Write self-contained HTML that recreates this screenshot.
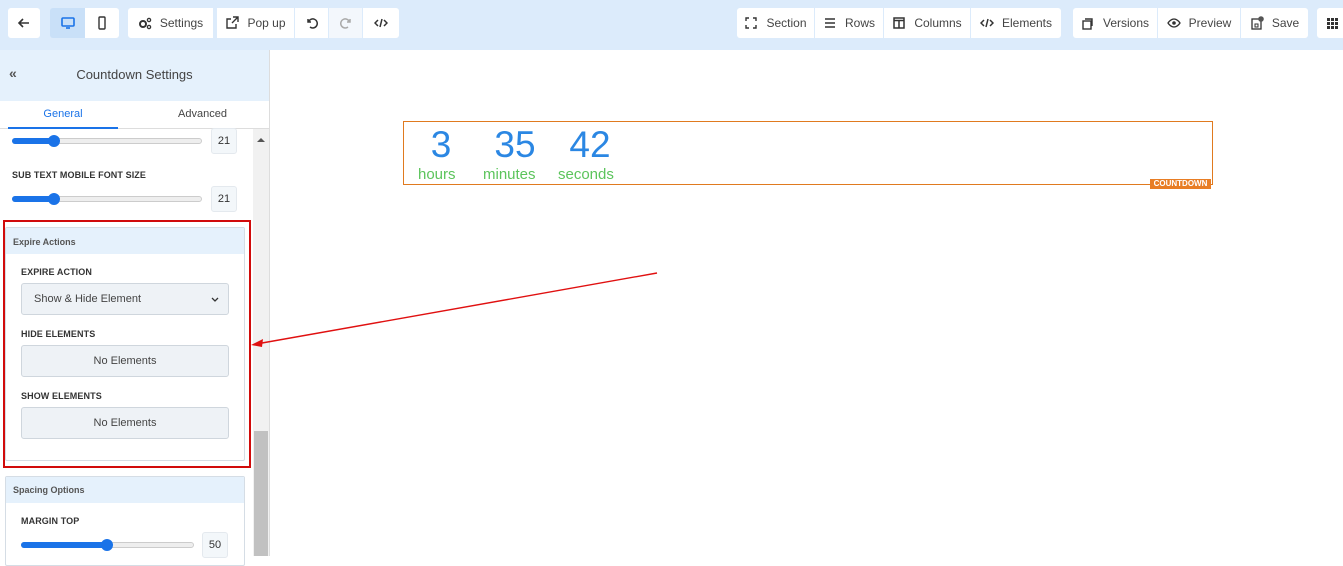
<!DOCTYPE html>
<html><head><meta charset="utf-8"><style>
*{box-sizing:border-box;margin:0;padding:0}
body{width:1343px;height:556px;overflow:hidden;background:#fff;font-family:"Liberation Sans",Arial,sans-serif;position:relative;color:#333}
.abs{position:absolute}
.top{left:0;top:0;width:1343px;height:50px;background:#dcebfb}
.b{position:absolute;top:8px;height:30px;background:#fff;display:flex;align-items:center;justify-content:center;font-size:12px;color:#444;gap:8px}
.b svg{width:14px;height:14px}
.side{left:0;top:50px;width:270px;height:506px;border-right:1px solid #ddd;background:#fff}
.lbl{font-size:9px;font-weight:bold;color:#333;letter-spacing:.1px}
.trk{position:absolute;height:6px;border-radius:3px;background:#eee;border:1px solid #ccc}
.fill{position:absolute;height:6px;border-radius:3px;background:#1a73e8}
.knob{position:absolute;width:12px;height:12px;border-radius:50%;background:#1a73e8}
.num{position:absolute;width:26px;height:26px;background:#f3f7fa;border:1px solid #e4e9ee;border-radius:3px;font-size:11px;display:flex;align-items:center;justify-content:center;color:#333}
.box{position:absolute;left:21px;width:208px;height:32px;background:#eef2f6;border:1px solid #cfd6dd;border-radius:3px;font-size:11px;color:#444;display:flex;align-items:center}
.dg{position:absolute;top:124px;text-align:center;font-size:37px;color:#2b87e3;font-family:"Liberation Sans",sans-serif;font-weight:normal}
</style></head><body>
<div class="abs top"></div>
<div class="b" style="left:8px;width:32px;border-radius:3px"><svg viewBox="0 0 14 14"><path d="M12 7H2M6 3L2 7l4 4" stroke="#333" stroke-width="1.6" fill="none"/></svg></div>
<div class="b" style="left:50px;width:35px;background:#c9e0f8;border-radius:3px 0 0 3px"><svg viewBox="0 0 14 14"><rect x="1" y="2" width="12" height="8" rx="1" fill="none" stroke="#1a73e8" stroke-width="1.6"/><path d="M5 12h4" stroke="#1a73e8" stroke-width="1.6"/></svg></div>
<div class="b" style="left:85px;width:34px;border-radius:0 3px 3px 0"><svg viewBox="0 0 14 14"><rect x="4" y="1" width="6" height="12" rx="1" fill="none" stroke="#333" stroke-width="1.4"/></svg></div>
<div class="b" style="left:128px;width:85px;border-radius:3px 0 0 3px"><svg viewBox="0 0 14 14"><circle cx="5" cy="8" r="3" fill="none" stroke="#333" stroke-width="2"/><circle cx="11" cy="4" r="1.6" fill="none" stroke="#333" stroke-width="1.3"/><circle cx="11" cy="11" r="1.6" fill="none" stroke="#333" stroke-width="1.3"/></svg>Settings</div>
<div class="b" style="left:217px;width:77px"><svg viewBox="0 0 14 14"><path d="M11 8v4H2V3h4M8 1h5v5M13 1L7 7" stroke="#333" stroke-width="1.4" fill="none"/></svg>Pop up</div>
<div class="b" style="left:295px;width:33px"><svg viewBox="0 0 14 14"><path d="M3 3v3h3M3.5 6A4.5 4.5 0 1 1 5 11" stroke="#333" stroke-width="1.5" fill="none"/></svg></div>
<div class="b" style="left:329px;width:33px;background:#f3f7fc"><svg viewBox="0 0 14 14"><path d="M11 3v3H8M10.5 6A4.5 4.5 0 1 0 9 11" stroke="#aaa" stroke-width="1.5" fill="none"/></svg></div>
<div class="b" style="left:363px;width:36px;border-radius:0 3px 3px 0"><svg viewBox="0 0 14 14"><path d="M4 4L1 7l3 3M10 4l3 3-3 3M8 3L6 11" stroke="#333" stroke-width="1.5" fill="none"/></svg></div>
<div class="b" style="left:737px;width:77px;border-radius:3px 0 0 3px"><svg viewBox="0 0 14 14"><path d="M2 5V2h3M9 2h3v3M12 9v3H9M5 12H2V9" stroke="#333" stroke-width="1.4" fill="none"/></svg>Section</div>
<div class="b" style="left:815px;width:68px"><svg viewBox="0 0 14 14"><path d="M2 3h10M2 7h10M2 11h10" stroke="#333" stroke-width="1.4"/></svg>Rows</div>
<div class="b" style="left:884px;width:86px"><svg viewBox="0 0 14 14"><rect x="2" y="2" width="10" height="10" fill="none" stroke="#333" stroke-width="1.5"/><path d="M2 4.5h10M7 4v8" stroke="#333" stroke-width="1.5"/></svg>Columns</div>
<div class="b" style="left:971px;width:90px;border-radius:0 3px 3px 0"><svg viewBox="0 0 14 14"><path d="M4 4L1 7l3 3M10 4l3 3-3 3M8 3L6 11" stroke="#333" stroke-width="1.5" fill="none"/></svg>Elements</div>
<div class="b" style="left:1073px;width:84px;border-radius:3px 0 0 3px"><svg viewBox="0 0 14 14"><rect x="2" y="5" width="8" height="8" fill="none" stroke="#333" stroke-width="1.4"/><path d="M4 3h7v7" stroke="#333" stroke-width="1.4" fill="none"/></svg>Versions</div>
<div class="b" style="left:1158px;width:82px"><svg viewBox="0 0 14 14"><path d="M1 7s2.5-4 6-4 6 4 6 4-2.5 4-6 4-6-4-6-4z" fill="none" stroke="#333" stroke-width="1.3"/><circle cx="7" cy="7" r="1.8" fill="#333"/></svg>Preview</div>
<div class="b" style="left:1241px;width:67px;border-radius:0 3px 3px 0"><svg viewBox="0 0 14 14"><rect x="2" y="3" width="9" height="10" fill="none" stroke="#333" stroke-width="1.3"/><rect x="5" y="8" width="3" height="3" fill="none" stroke="#333" stroke-width="1"/><circle cx="11" cy="3" r="2.8" fill="#555"/></svg>Save</div>
<div class="b" style="left:1317px;width:30px;border-radius:3px 0 0 3px"><svg viewBox="0 0 14 14"><g fill="#333"><rect x="2" y="2" width="3" height="3"/><rect x="6" y="2" width="3" height="3"/><rect x="10" y="2" width="3" height="3"/><rect x="2" y="6" width="3" height="3"/><rect x="6" y="6" width="3" height="3"/><rect x="10" y="6" width="3" height="3"/><rect x="2" y="10" width="3" height="3"/><rect x="6" y="10" width="3" height="3"/><rect x="10" y="10" width="3" height="3"/></g></svg></div>

<div class="abs side"></div>
<div class="abs" style="left:0;top:50px;width:269px;height:51px;background:#e5f1fc"></div>
<div class="abs" style="left:9px;top:65px;font-size:14px;font-weight:bold;color:#555">«</div>
<div class="abs" style="left:0;top:67px;width:269px;text-align:center;font-size:13px;color:#444">Countdown Settings</div>
<div class="abs" style="left:0;top:101px;width:269px;height:28px;border-bottom:1px solid #ddd"></div>
<div class="abs" style="left:8px;top:108px;width:110px;text-align:center;font-size:11px;color:#1a73e8">General</div>
<div class="abs" style="left:8px;top:127px;width:110px;height:2px;background:#1a73e8"></div>
<div class="abs" style="left:135px;top:108px;width:135px;text-align:center;font-size:11px;color:#444">Advanced</div>
<div class="abs" style="left:253px;top:129px;width:16px;height:427px;background:#f1f1f1"></div>
<div class="abs" style="left:257px;top:138px;width:0;height:0;border-left:4px solid transparent;border-right:4px solid transparent;border-bottom:4px solid #555"></div>
<div class="abs" style="left:254px;top:431px;width:14px;height:125px;background:#c1c1c1"></div>

<div class="trk" style="left:12px;top:138px;width:190px"></div><div class="fill" style="left:12px;top:138px;width:42px"></div><div class="knob" style="left:48px;top:135px"></div>
<div class="num" style="left:211px;top:128px">21</div>
<div class="abs lbl" style="left:12px;top:170px">SUB TEXT MOBILE FONT SIZE</div>
<div class="trk" style="left:12px;top:196px;width:190px"></div><div class="fill" style="left:12px;top:196px;width:42px"></div><div class="knob" style="left:48px;top:193px"></div>
<div class="num" style="left:211px;top:186px">21</div>

<div class="abs" style="left:3px;top:220px;width:248px;height:248px;border:2px solid #d10b0b"></div>
<div class="abs" style="left:5px;top:227px;width:240px;height:234px;border:1px solid #d5dde5;border-radius:2px"></div>
<div class="abs" style="left:6px;top:228px;width:238px;height:26px;background:#e5f1fc"></div>
<div class="abs" style="left:13px;top:237px;font-size:9px;font-weight:bold;color:#555">Expire Actions</div>
<div class="abs lbl" style="left:21px;top:267px">EXPIRE ACTION</div>
<div class="box" style="top:283px;padding-left:12px">Show &amp; Hide Element<svg style="position:absolute;right:9px;top:13px" width="8" height="6" viewBox="0 0 8 6"><path d="M1 1l3 3 3-3" stroke="#333" stroke-width="1.3" fill="none"/></svg></div>
<div class="abs lbl" style="left:21px;top:329px">HIDE ELEMENTS</div>
<div class="box" style="top:345px;justify-content:center">No Elements</div>
<div class="abs lbl" style="left:21px;top:391px">SHOW ELEMENTS</div>
<div class="box" style="top:407px;justify-content:center">No Elements</div>

<div class="abs" style="left:5px;top:476px;width:240px;height:90px;border:1px solid #d5dde5;border-radius:2px"></div>
<div class="abs" style="left:6px;top:477px;width:238px;height:26px;background:#e5f1fc"></div>
<div class="abs" style="left:13px;top:485px;font-size:9px;font-weight:bold;color:#555">Spacing Options</div>
<div class="abs lbl" style="left:21px;top:516px">MARGIN TOP</div>
<div class="trk" style="left:21px;top:542px;width:173px"></div><div class="fill" style="left:21px;top:542px;width:86px"></div><div class="knob" style="left:101px;top:539px"></div>
<div class="num" style="left:202px;top:532px">50</div>

<div class="abs" style="left:403px;top:121px;width:810px;height:64px;border:1px solid #e07a1f"></div>
<div class="abs" style="left:1150px;top:179px;width:61px;height:10px;background:#e87d24;color:#fff;font-size:8px;font-weight:bold;line-height:10px;text-align:center">COUNTDOWN</div>
<div class="dg" style="left:418px;width:46px">3</div>
<div class="dg" style="left:485px;width:60px">35</div>
<div class="dg" style="left:560px;width:60px">42</div>
<div class="abs" style="left:418px;top:166px;font-size:15px;color:#5cc45c">hours</div>
<div class="abs" style="left:483px;top:166px;font-size:15px;color:#5cc45c">minutes</div>
<div class="abs" style="left:558px;top:166px;font-size:15px;color:#5cc45c">seconds</div>

<svg class="abs" style="left:0;top:0" width="1343" height="556"><line x1="657" y1="273" x2="262" y2="343" stroke="#e01010" stroke-width="1.4"/><path d="M251 345l12-6-1 8z" fill="#e01010"/></svg>
</body></html>
